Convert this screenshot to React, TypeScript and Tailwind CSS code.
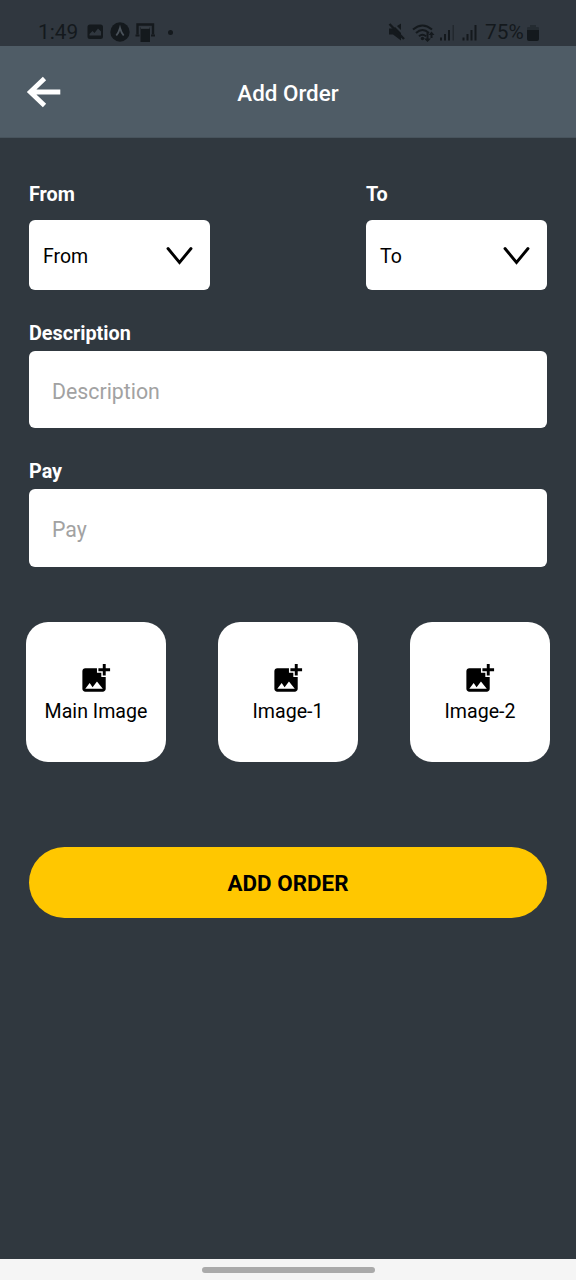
import { MdAddPhotoAlternate } from "react-icons/md";

function StatusBar() {
  return (
    <div className="flex h-[46px] shrink-0 items-end justify-between bg-[#30373f] pr-[37px] pb-[3px] pl-[38px] text-[#14191d]">
      <div className="flex h-[22px] items-center">
        <span className="w-[49px] text-[20.8px] leading-[22px]">1:49</span>
        <svg width="84" height="22" viewBox="0 0 84 22" fill="currentColor">
          <path
            fillRule="evenodd"
            d="M3 3.500h10.500q2.500 0 2.500 2.500v9.500q0 2.500-2.500 2.500h-10.500q-2.500 0-2.500-2.500v-9.500q0-2.500 2.500-2.500zM2.500 14.500h11.500v-4l-3-3-3.500 4.500-2-2-3 3z"
          />
          <circle cx="33" cy="11" r="9.700" />
          <path d="M29.300 14.500q2.500-3 3.700-7.500 1.200 4.500 3.700 7.500" fill="none" stroke="#4a525a" strokeWidth="1.800" />
          <path d="M50.500 13.500v-10h15.500v10" fill="none" stroke="currentColor" strokeWidth="2.400" />
          <path d="M48.500 13.500h4v2h-4zM64 13.500h4v2h-4z" />
          <path d="M53.500 6.500h9.500v14.500h-9.500z" />
          <path d="M54 7h8.500" stroke="#4a525a" strokeWidth="1" />
        </svg>
        <span className="ml-[-3px] h-[5px] w-[5px] rounded-full bg-[#14191d]" />
      </div>
      <div className="flex h-[22px] items-center">
        <svg width="94" height="22" viewBox="0 0 94 22" fill="currentColor">
          <path d="M1 7.500h4l8-5v17l-8-6h-4z" />
          <path d="M3 .5l17 17" stroke="#30373f" strokeWidth="2" />
          <path d="M1.500 3l14.500 15" stroke="currentColor" strokeWidth="2.400" />
          <g fill="none" stroke="currentColor" strokeWidth="2">
            <path d="M25 8.500q9.500-8 19 0" />
            <path d="M28 12q6.500-6 13 0" />
            <path d="M31 15.200q3.500-3 7 0" />
          </g>
          <circle cx="34.500" cy="17.500" r="1.700" />
          <path d="M38.500 11.500v6h-2.500l3.500 3.500 3.500-3.500h-2.500v-6zM42.500 17v-3h-2l3-3.500 3 3.500h-2v3z" />
          <path d="M52 16.500h2v3h-2zM56 13h2v6.500h-2zM60 9h2v10.500h-2z" />
          <path d="M64.500 4h1.500v15.500h-1.500z" opacity=".5" />
          <path d="M74.500 16.500h2v3h-2zM78.500 13h2v6.500h-2zM82.500 9h2v10.500h-2zM86.500 4h2v15.500h-2z" />
        </svg>
        <span className="ml-[3px] w-[42px] text-[20.8px] leading-[22px]">75%</span>
        <svg width="12" height="18" viewBox="0 0 12 18" className="mt-[2px]" fill="currentColor">
          <path d="M3 1h6v2h2q1 0 1 1v2h-12v-2q0-1 1-1h2z" opacity=".4" />
          <path d="M0 6h12v9q0 2-2 2h-8q-2 0-2-2z" />
        </svg>
      </div>
    </div>
  );
}

function Header() {
  return (
    <header className="grid h-[92px] shrink-0 grid-cols-[1fr_auto_1fr] items-center border-b border-[#47535c] bg-[#4f5c66] px-[26px]">
      <svg width="36" height="36" viewBox="0 0 36 36" fill="none" stroke="white" strokeWidth="4.800">
        <path d="M18.500 4.500L4.300 18l14.200 13.500M4 18h30.300" />
      </svg>
      <h1 className="pt-[4px] text-[22.400px] font-medium text-white">Add Order</h1>
    </header>
  );
}

function Select({ label }: { label: string }) {
  return (
    <div className="w-[181px]">
      <div className="h-[36px] pt-px text-[19.800px] leading-[20px] font-bold text-white">{label}</div>
      <button className="flex h-[70px] w-full items-center justify-between rounded-[6px] bg-white pr-[17px] pl-[14px] text-[19.500px] text-black">
        <span className="pt-[4px]">{label}</span>
        <svg width="27" height="20" viewBox="0 0 27 20" fill="none" stroke="black" strokeWidth="2.900" strokeLinecap="round">
          <path d="M2 3.500l11.500 14L25 3.500" />
        </svg>
      </button>
    </div>
  );
}

function Field({ label, inputClass }: { label: string; inputClass: string }) {
  return (
    <label className="block h-[138px]">
      <span className="block pt-px pb-[7px] text-[19.800px] leading-[20px] font-bold text-white">{label}</span>
      <input
        placeholder={label}
        className={`block w-full rounded-[6px] bg-white px-[23px] text-[21.300px] placeholder:text-[#a2a2a2] ${inputClass}`}
      />
    </label>
  );
}

function ImageTile({ label }: { label: string }) {
  return (
    <button className="flex h-[140px] w-[140px] flex-col items-center rounded-[22px] bg-white pt-[39px] text-black">
      <MdAddPhotoAlternate size={35} className="mr-px" />
      <span className="mt-[4px] text-[19.600px] leading-[24px]">{label}</span>
    </button>
  );
}

export default function App() {
  return (
    <div className="flex h-[1280px] w-[576px] flex-col bg-[#30383f] font-['Roboto',sans-serif]">
      <StatusBar />
      <Header />
      <main className="flex-1 px-[29px] pt-[46px]">
        <div className="flex h-[139px] justify-between">
          <Select label="From" />
          <Select label="To" />
        </div>
        <Field label="Description" inputClass="mt-[-0.5px] h-[77px] pt-[5px]" />
        <Field label="Pay" inputClass="mt-[-0.5px] h-[78px] pt-[4px]" />
        <div className="-mx-[3px] mt-[23px] flex justify-between">
          <ImageTile label="Main Image" />
          <ImageTile label="Image-1" />
          <ImageTile label="Image-2" />
        </div>
        <button className="mt-[85px] h-[71px] w-full rounded-full bg-[#ffc700] pt-[2px] text-[22.400px] font-bold text-black">
          ADD ORDER
        </button>
      </main>
      <footer className="flex h-[21px] shrink-0 justify-center bg-[#f5f5f5] pt-[8px]">
        <div className="h-[6px] w-[173px] rounded-full bg-[#aaaaaa]" />
      </footer>
    </div>
  );
}
